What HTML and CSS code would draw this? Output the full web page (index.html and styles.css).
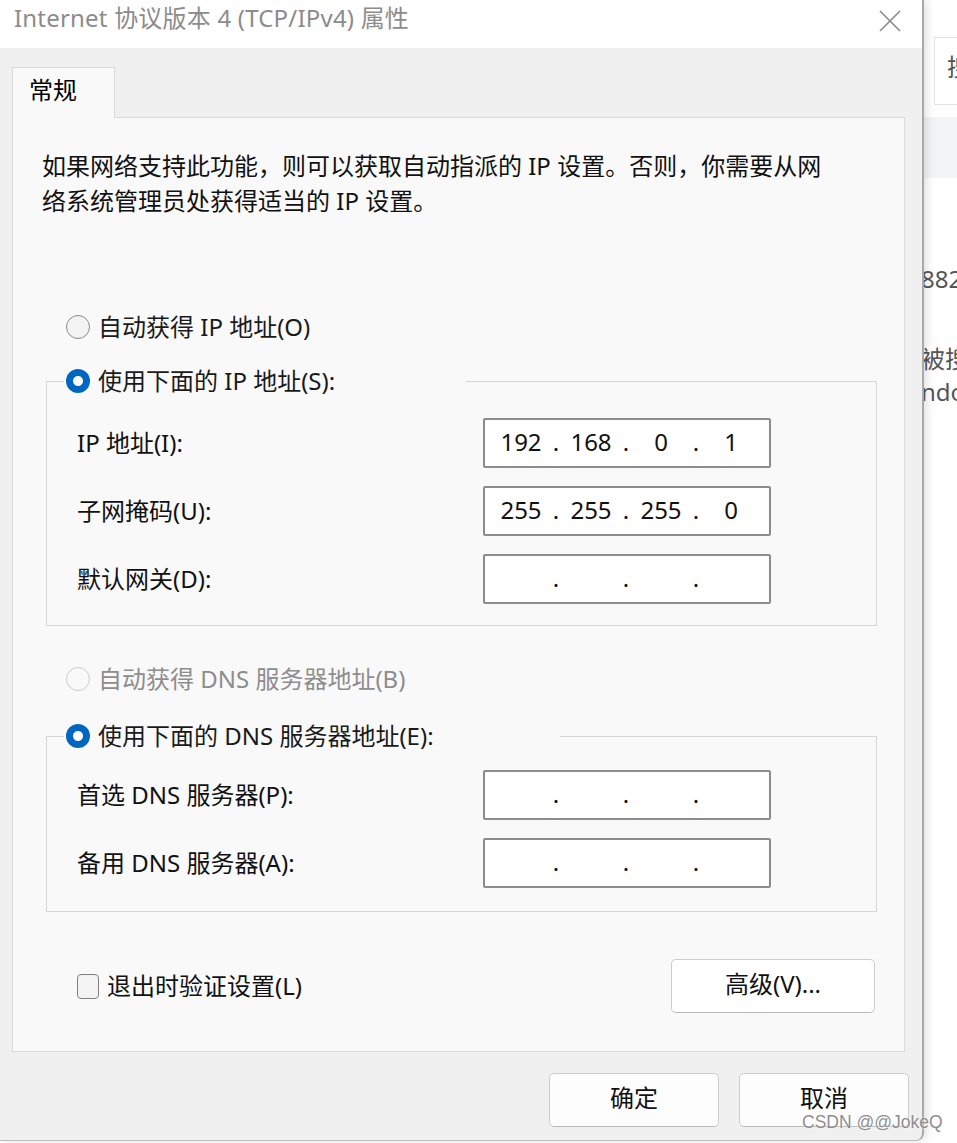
FILE: index.html
```html
<!DOCTYPE html>
<html lang="zh-CN">
<head>
<meta charset="utf-8">
<title>Internet 协议版本 4 (TCP/IPv4) 属性</title>
<link rel="stylesheet" href="styles.css">
</head>
<body>
<div class="screen">
  <div class="dialog">
    <div class="titlebar">
      <span class="title">Internet 协议版本 4 (TCP/IPv4) 属性</span>
      <svg class="close" width="24" height="24" viewBox="0 0 24 24"><path d="M2 2 L22 22 M22 2 L2 22" stroke="#8a8a8a" stroke-width="1.6" fill="none"/></svg>
    </div>
    <div class="content">
      <div class="tabs"><div class="tab">常规</div></div>
      <div class="panel">
        <p class="intro">如果网络支持此功能，则可以获取自动指派的 IP 设置。否则，你需要从网<br>络系统管理员处获得适当的 IP 设置。</p>

        <div class="radio-row first">
          <span class="radio"></span><span>自动获得 IP 地址(O)</span>
        </div>

        <fieldset class="group ip-group">
          <legend class="legend ip-legend"><span class="radio checked"></span><span>使用下面的 IP 地址(S):</span></legend>
          <div class="field-row top">
            <span class="label">IP 地址(I):</span>
            <div class="ipbox"><span class="oct">192</span><span class="dot">.</span><span class="oct">168</span><span class="dot">.</span><span class="oct">0</span><span class="dot">.</span><span class="oct">1</span></div>
          </div>
          <div class="field-row">
            <span class="label">子网掩码(U):</span>
            <div class="ipbox"><span class="oct">255</span><span class="dot">.</span><span class="oct">255</span><span class="dot">.</span><span class="oct">255</span><span class="dot">.</span><span class="oct">0</span></div>
          </div>
          <div class="field-row">
            <span class="label">默认网关(D):</span>
            <div class="ipbox"><span class="oct"></span><span class="dot">.</span><span class="oct"></span><span class="dot">.</span><span class="oct"></span><span class="dot">.</span><span class="oct"></span></div>
          </div>
        </fieldset>

        <div class="radio-row dns-auto disabled">
          <span class="radio disabled"></span><span>自动获得 DNS 服务器地址(B)</span>
        </div>

        <fieldset class="group dns-group">
          <legend class="legend dns-legend"><span class="radio checked"></span><span>使用下面的 DNS 服务器地址(E):</span></legend>
          <div class="field-row top dns-top">
            <span class="label">首选 DNS 服务器(P):</span>
            <div class="ipbox"><span class="oct"></span><span class="dot">.</span><span class="oct"></span><span class="dot">.</span><span class="oct"></span><span class="dot">.</span><span class="oct"></span></div>
          </div>
          <div class="field-row">
            <span class="label">备用 DNS 服务器(A):</span>
            <div class="ipbox"><span class="oct"></span><span class="dot">.</span><span class="oct"></span><span class="dot">.</span><span class="oct"></span><span class="dot">.</span><span class="oct"></span></div>
          </div>
        </fieldset>

        <div class="footer-row">
          <label class="check-row"><span class="checkbox"></span><span>退出时验证设置(L)</span></label>
          <button class="btn advanced">高级(V)...</button>
        </div>
      </div>
      <div class="buttons">
        <button class="btn action">确定</button>
        <button class="btn action">取消</button>
      </div>
    </div>
  </div>
  <div class="side">
    <div class="side-search">搜</div>
    <div class="side-band"></div>
    <div class="side-text t1">882</div>
    <div class="side-text t2">被搜</div>
    <div class="side-text t3">ndo</div>
  </div>
  <div class="watermark">CSDN @@JokeQ</div>
</div>
</body>
</html>
```

FILE: styles.css
```css
* { box-sizing: border-box; }

html, body {
  margin: 0;
  padding: 0;
  background: #ffffff;
}

body {
  font-family: "Noto Sans", "Noto Sans CJK SC", sans-serif;
  font-size: 24px;
  color: #1a1a1a;
}

.screen {
  position: relative;
  display: flex;
  width: 957px;
  height: 1143px;
  overflow: hidden;
  background: #ffffff;
}

.dialog {
  position: relative;
  z-index: 1;
  flex: none;
  width: 924px;
  height: 1141px;
  background: #f0f0f0;
  border-right: 2px solid #a9a9a9;
  border-bottom: 1px solid #bdbdbd;
  border-bottom-right-radius: 8px;
  box-shadow: 3px 0 8px rgba(0, 0, 0, 0.12);
  display: flex;
  flex-direction: column;
}

.titlebar {
  height: 48px;
  flex: none;
  background: #ffffff;
  display: flex;
  justify-content: space-between;
  align-items: flex-start;
  padding: 3px 20px 0 14px;
}

.title {
  font-size: 24px;
  line-height: 30px;
  color: #8c8c8c;
  letter-spacing: 0.2px;
}

.close {
  margin-top: 6px;
}

.content {
  padding: 19px 17px 0 12px;
}

.tabs {
  display: flex;
}

.tab {
  position: relative;
  z-index: 1;
  width: 103px;
  height: 51px;
  margin-bottom: -1px;
  padding: 7px 0 0 16px;
  line-height: 30px;
  background: #f9f9f9;
  border: 1px solid #d9d9d9;
  border-bottom: none;
  color: #000;
}

.panel {
  height: 935px;
  background: #f9f9f9;
  border: 1px solid #dadada;
  padding-top: 30px;
}

.intro {
  margin: 0;
  padding-left: 29px;
  line-height: 35px;
  color: #111;
}

.radio-row {
  display: flex;
  align-items: center;
  gap: 8px;
  height: 30px;
  padding-left: 53px;
}

.radio-row > span:last-child {
  margin-top: -3px;
}

.radio-row.first {
  margin-top: 94px;
}

.radio {
  flex: none;
  width: 24px;
  height: 24px;
  border-radius: 50%;
  border: 1.5px solid #8a8a8a;
  background: #f3f3f3;
}

.radio.checked {
  border: none;
  background: radial-gradient(circle, #ffffff 0 4.5px, #0067c0 5.5px);
}

.radio.disabled {
  border-color: #cccccc;
  background: #f9f9f9;
}

.radio-row.disabled {
  color: #8d8d8d;
}

.group {
  margin: 0 27px 0 33px;
  padding: 0 105px 0 30px;
  border: 1px solid #d7d7d7;
  min-inline-size: 0;
}

.ip-group {
  margin-top: 24px;
  padding-bottom: 21px;
}

.dns-group {
  margin-top: 27px;
  padding-bottom: 23px;
}

.legend {
  display: flex;
  align-items: center;
  gap: 8px;
  height: 30px;
  margin-left: -13px;
  padding: 0 0 0 2px;
  background: #f9f9f9;
}

.legend > span:last-child {
  margin-top: -3px;
}

.ip-legend { padding-right: 131px; }
.dns-legend { padding-right: 126px; }

.field-row {
  display: flex;
  align-items: center;
  margin-top: 18px;
}

.field-row.top { margin-top: 22px; }
.field-row.dns-top { margin-top: 19px; }

.label {
  flex: 1;
  color: #111;
  margin-top: -3px;
}

.ipbox {
  flex: none;
  width: 288px;
  height: 50px;
  background: #ffffff;
  border: 2px solid #8c8c8c;
  border-radius: 2px;
  display: flex;
  align-items: center;
  padding: 0 0 4px 10px;
  color: #111;
}

.oct {
  width: 52px;
  text-align: center;
}

.dot {
  width: 18px;
  text-align: center;
}

.dns-auto {
  margin-top: 38px;
}

.footer-row {
  display: flex;
  justify-content: space-between;
  align-items: center;
  margin-top: 47px;
  padding: 0 29px 0 64px;
}

.check-row {
  display: flex;
  align-items: center;
  gap: 8px;
  color: #111;
}

.check-row > span:last-child {
  margin-top: -4px;
}

.checkbox {
  width: 22px;
  height: 25px;
  border: 1.5px solid #7f7f7f;
  border-radius: 4px;
  background: #f3f3f3;
}

.btn {
  font-family: "Noto Sans", "Noto Sans CJK SC", sans-serif;
  font-size: 24px;
  line-height: 30px;
  color: #111;
  background: #fdfdfd;
  border: 1.5px solid #cdcdcd;
  border-bottom-color: #b9b9b9;
  border-radius: 5px;
  padding: 0 0 5px 0;
}

.advanced {
  width: 204px;
  height: 54px;
  background: #ffffff;
}

.buttons {
  display: flex;
  justify-content: flex-end;
  gap: 20px;
  margin: 21px -4px 0 0;
}

.action {
  width: 170px;
  height: 54px;
}

.side {
  flex: 1;
  display: flex;
  flex-direction: column;
  overflow: hidden;
  background: #ffffff;
  color: #555555;
  font-size: 24px;
}

.side-search {
  margin: 37px 0 0 10px;
  height: 68px;
  width: 60px;
  border: 1px solid #e2e2e2;
  border-right: none;
  padding: 14px 0 0 12px;
  line-height: 30px;
  white-space: nowrap;
}

.side-band {
  margin-top: 12px;
  height: 61px;
  background: #f3f4f6;
}

.side-text {
  white-space: nowrap;
  line-height: 32px;
  margin-left: -3px;
}

.t1 { margin-top: 85px; }
.t2 { margin-top: 48px; }
.t3 { margin-top: 1px; }

.watermark {
  position: absolute;
  z-index: 2;
  left: 802px;
  top: 1110px;
  font-family: "Liberation Sans", "Noto Sans", sans-serif;
  font-size: 17.5px;
  line-height: 24px;
  color: #8e8e8e;
  text-shadow: 0 0 2px #ffffff;
}
```
